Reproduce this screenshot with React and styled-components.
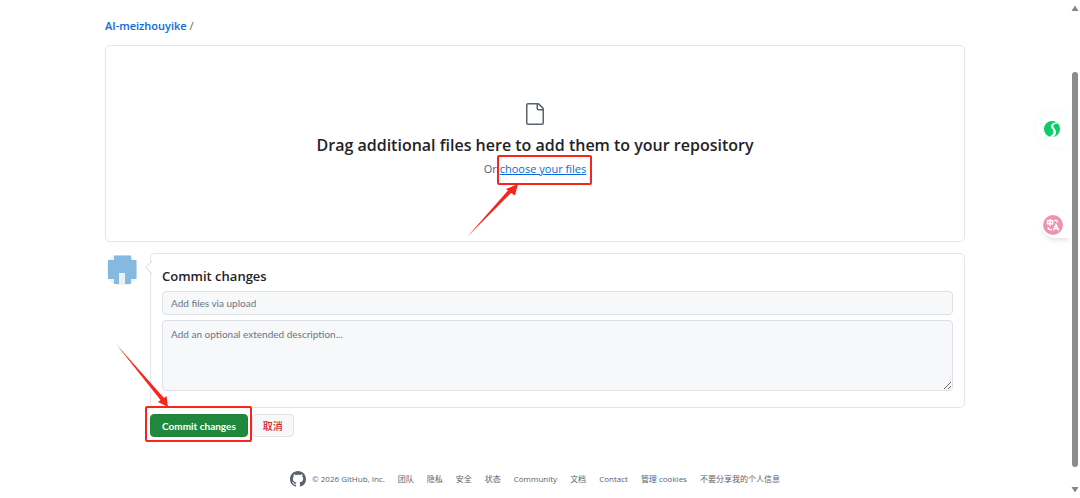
import React from "react";
import styled, { createGlobalStyle } from "styled-components";
import { GoFile } from "react-icons/go";

const GlobalStyle = createGlobalStyle`
  * { box-sizing: border-box; }
  body {
    margin: 0;
    background: #fff;
    color: #1f2328;
    font-family: "Open Sans", "Noto Sans CJK SC", sans-serif;
    font-size: 11px;
    line-height: 16px;
  }
`;

const Shell = styled.div`
  display: flex;
  align-items: flex-start;
  min-height: 100vh;
`;

const Page = styled.div`
  flex: 1;
  min-width: 0;
  padding: 18px 16px 8px;
`;

const Container = styled.main`
  width: 100%;
  max-width: 860px;
  margin: 0 auto;
`;

const Breadcrumb = styled.nav`
  color: #59636e;
  font-size: 11px;
  line-height: 16px;
`;

const RepoLink = styled.a`
  color: #0969da;
  font-weight: 600;
  text-decoration: none;
`;

const Panel = styled.section`
  border: 1px solid #e2e5e9;
  border-radius: 5px;
  background: #fff;
`;

const DropZone = styled(Panel)`
  display: flex;
  flex-direction: column;
  align-items: center;
  margin-top: 11px;
  padding: 56px 16px 64px;
  color: #59636e;
  text-align: center;
`;

const DropTitle = styled.h2`
  margin: 7px 0 4px;
  color: #1f2328;
  font-size: 16px;
  font-weight: 600;
  line-height: 24px;
`;

const DropHint = styled.p`
  margin: 0;
  font-size: 11px;
  line-height: 16px;
`;

const Marked = styled.span`
  position: relative;
  display: inline-block;
`;

const Highlight = styled.span`
  position: absolute;
  inset: ${(p) => p.$inset};
  border: 2px solid #f5261b;
  border-radius: 2px;
  pointer-events: none;
`;

const Arrow = styled.svg`
  position: absolute;
  top: ${(p) => p.$top}px;
  left: ${(p) => p.$left}px;
  overflow: visible;
  pointer-events: none;
`;

const FileLink = styled.a`
  color: #0969da;
  text-decoration: underline;
`;

const CommitForm = styled.form`
  display: grid;
  grid-template-columns: 30px 1fr;
  column-gap: 13px;
  margin-top: 11px;
  padding-left: 2px;
`;

const Avatar = styled.svg`
  margin-top: 2px;
`;

const CommitPanel = styled(Panel)`
  position: relative;
  padding: 12px 11px 16px;
`;

const Caret = styled.svg`
  position: absolute;
  top: 7px;
  left: -6px;
`;

const CommitTitle = styled.h3`
  margin: 0 0 5px;
  font-size: 13px;
  font-weight: 600;
  line-height: 20px;
`;

const fieldStyles = `
  display: block;
  width: 100%;
  border: 1px solid #dde1e6;
  border-radius: 4px;
  background: #f6f8fa;
  color: #1f2328;
  font: inherit;
  font-family: Lato, "Noto Sans CJK SC", sans-serif;
  font-size: 10px;
  &::placeholder { color: #6b747e; opacity: 1; }
`;

const SummaryInput = styled.input`
  ${fieldStyles}
  height: 24px;
  padding: 0 8px;
`;

const DescriptionInput = styled.textarea`
  ${fieldStyles}
  height: 71px;
  margin-top: 5px;
  padding: 5px 8px;
  resize: vertical;
`;

const Actions = styled.div`
  grid-column: 2;
  display: flex;
  gap: 4px;
  margin-top: 6px;
`;

const Button = styled.button`
  height: 23px;
  padding: 0 ${(p) => (p.$primary ? 11 : 10)}px;
  border: 1px solid ${(p) => (p.$primary ? "#1f8039" : "#e0e4e8")};
  border-radius: 4px;
  background: ${(p) => (p.$primary ? "#1f883d" : "#f6f8fa")};
  color: ${(p) => (p.$primary ? "#fff" : "#cf222e")};
  font: inherit;
  font-family: Lato, "Noto Sans CJK SC", sans-serif;
  font-size: 10px;
  font-weight: ${(p) => (p.$primary ? 700 : 500)};
  white-space: nowrap;
`;

const Footer = styled.footer`
  display: flex;
  flex-wrap: wrap;
  align-items: center;
  justify-content: center;
  gap: 4px 13px;
  margin-top: 34px;
  color: #59636e;
  font-size: 8px;
  line-height: 16px;
`;

const Copyright = styled.span`
  display: flex;
  align-items: center;
  gap: 6px;
`;

const FooterLink = styled.a`
  color: inherit;
  text-decoration: none;
`;

const ScrollRail = styled.div`
  position: sticky;
  top: 0;
  flex: none;
  display: flex;
  flex-direction: column;
  align-items: center;
  width: 10px;
  height: 100vh;
  padding: 5px 0;
`;

const ScrollThumb = styled.div`
  flex: 1;
  width: 6px;
  margin: 61px 0 20px;
  border-radius: 3px;
  background: #8b8b8b;
`;

const SideTool = styled.button`
  position: fixed;
  top: ${(p) => p.$top}px;
  right: 10px;
  display: flex;
  align-items: center;
  width: ${(p) => (p.$wide ? 34 : 28)}px;
  height: ${(p) => (p.$wide ? 36 : 26)}px;
  padding: 0 0 0 ${(p) => (p.$wide ? 8 : 1)}px;
  border: 0;
  border-radius: 18px 0 0 18px;
  background: #fff;
  box-shadow: ${(p) =>
    p.$wide ? "0 0 8px rgba(0,0,0,0.04)" : "0 3px 5px -1px rgba(0,0,0,0.12)"};
  clip-path: inset(-12px 0 -12px -12px);
`;

const footerLinks = [
  "团队",
  "隐私",
  "安全",
  "状态",
  "Community",
  "文档",
  "Contact",
  "管理 cookies",
  "不要分享我的个人信息",
];

function GitHubMark() {
  return (
    <svg width="16" height="16" viewBox="0 0 16 16" fill="currentColor" aria-hidden="true">
      <path d="M8 0c4.420 0 8 3.580 8 8a8.013 8.013 0 0 1-5.450 7.590c-.4.080-.550-.170-.550-.380 0-.270.010-1.130.010-2.200 0-.750-.250-1.230-.540-1.480 1.780-.2 3.650-.880 3.650-3.950 0-.880-.310-1.590-.820-2.150.080-.2.360-1.020-.080-2.120 0 0-.670-.220-2.200.820-.640-.180-1.320-.270-2-.270-.680 0-1.360.090-2 .270-1.530-1.030-2.200-.820-2.200-.820-.440 1.100-.160 1.920-.080 2.120-.510.560-.820 1.280-.820 2.150 0 3.060 1.860 3.750 3.640 3.950-.230.2-.440.550-.510 1.070-.460.210-1.610.550-2.330-.660-.150-.240-.6-.830-1.230-.820-.670.010-.270.380.010.530.340.190.730.9.820 1.130.160.450.680 1.310 2.690.940 0 .670.010 1.300.010 1.490 0 .210-.150.450-.550.380A7.995 7.995 0 0 1 0 8c0-4.420 3.580-8 8-8Z" />
    </svg>
  );
}

function Identicon() {
  return (
    <Avatar width="30" height="30" viewBox="0 0 30 30" aria-label="Avatar">
      <rect width="30" height="30" rx="12" fill="#eff0f1" />
      <path
        d="M7 0.500H24V5H29.500V24H24V29H18V18H12V29H7V24H1V5H7Z"
        fill="#86b9df"
      />
    </Avatar>
  );
}

export default function App() {
  return (
    <>
      <GlobalStyle />
      <Shell>
        <Page>
          <Container>
            <Breadcrumb>
              <RepoLink href="#repo">AI-meizhouyike</RepoLink> /
            </Breadcrumb>

            <DropZone>
              <GoFile size={24} />
              <DropTitle>Drag additional files here to add them to your repository</DropTitle>
              <DropHint>
                Or{" "}
                <Marked>
                  <FileLink href="#choose">choose your files</FileLink>
                  <Highlight $inset="-6px -6px -8px -3px" />
                  <Arrow $top={23} $left={-33} width="52" height="54" viewBox="0 0 52 54">
                    <path
                      d="M0 53L41 6.500L39 5L51 0L48 11.500L44 9Z"
                      fill="#f5261b"
                    />
                  </Arrow>
                </Marked>
              </DropHint>
            </DropZone>

            <CommitForm onSubmit={(e) => e.preventDefault()}>
              <Identicon />
              <CommitPanel>
                <Caret width="7" height="14" viewBox="0 0 7 14">
                  <path d="M7 0L0.700 6.500L7 13" fill="#fff" stroke="#d5dae0" />
                </Caret>
                <CommitTitle>Commit changes</CommitTitle>
                <SummaryInput
                  aria-label="Commit message"
                  placeholder="Add files via upload"
                />
                <DescriptionInput
                  aria-label="Extended description"
                  placeholder="Add an optional extended description..."
                />
              </CommitPanel>
              <Actions>
                <Marked>
                  <Button $primary type="submit">
                    Commit changes
                  </Button>
                  <Highlight $inset="-8px -4px -5px -5px" />
                  <Arrow $top={-70} $left={-34} width="52" height="63" viewBox="0 0 52 63">
                    <path
                      d="M0 0L48 54L50.500 52L52 63L42 58L44.500 56Z"
                      fill="#f5261b"
                    />
                  </Arrow>
                </Marked>
                <Button type="button">取消</Button>
              </Actions>
            </CommitForm>
          </Container>

          <Footer>
            <Copyright>
              <GitHubMark />© 2026 GitHub, Inc.
            </Copyright>
            {footerLinks.map((label) => (
              <FooterLink key={label} href="#footer">
                {label}
              </FooterLink>
            ))}
          </Footer>
        </Page>

        <ScrollRail aria-hidden="true">
          <svg width="8" height="6" viewBox="0 0 8 6">
            <path d="M4 0.500L7.500 6H0.500Z" fill="#858585" />
          </svg>
          <ScrollThumb />
          <svg width="8" height="6" viewBox="0 0 8 6">
            <path d="M4 5.500L7.500 0H0.500Z" fill="#858585" />
          </svg>
        </ScrollRail>
      </Shell>

      <SideTool $top={111} $wide aria-label="Assistant">
        <svg width="16" height="16" viewBox="0 0 16 16">
          <circle cx="8" cy="8" r="8" fill="#0ccb6b" />
          <path
            d="M13 1.500C9 1.200 6.500 3.500 7 6C7.500 8 9.800 8.500 9.500 11C9.300 13 7.500 14.500 5.500 15.500C7 16 8.500 16 9.500 15.800C11.500 14.500 12.200 12.500 12 10.500C11.800 8 9.300 7.200 9.300 5C9.300 3.500 10.500 2.500 13.800 2.400Z"
            fill="#fff"
          />
        </svg>
      </SideTool>
      <SideTool $top={212} aria-label="Translate">
        <svg width="20" height="20" viewBox="0 0 20 20">
          <circle cx="10" cy="10" r="10" fill="#ee94b2" />
          <g fill="none" stroke="#fff" strokeWidth="1.400">
            <path d="M4.500 5.800H9.700V8.700H4.500ZM7.100 4V11" />
            <path d="M11.500 5.500H13.200Q14.500 5.500 14.500 7.500M5.200 12.300Q5.200 14.600 7 14.600H9" />
            <path d="M10.300 15.500L13 9.500L15.700 15.500M11.200 13.500H14.800" />
          </g>
        </svg>
      </SideTool>
    </>
  );
}
